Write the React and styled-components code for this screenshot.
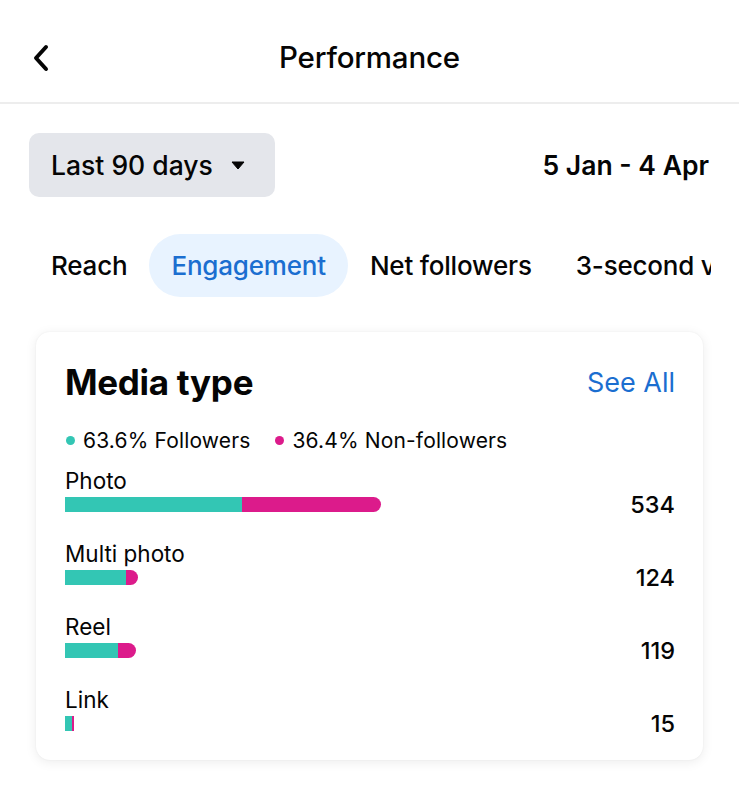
import React from 'react';
import styled, { createGlobalStyle } from 'styled-components';

const GlobalStyle = createGlobalStyle`
  html, body {
    margin: 0;
    padding: 0;
    background: #fff;
    font-family: Inter, "Noto Sans", sans-serif;
    color: #050505;
  }
`;

const Page = styled.div`
  width: 739px;
  height: 789px;
  overflow: hidden;
  background: #fff;
`;

const Header = styled.header`
  height: 104px;
  display: flex;
  align-items: center;
  justify-content: center;
  position: relative;
  border-bottom: 2px solid #ededed;
  box-sizing: border-box;
`;

const BackButton = styled.div`
  position: absolute;
  left: 30px;
  top: 42px;
  width: 24px;
  height: 32px;
`;

const Title = styled.h1`
  margin: 0;
  font-size: 29.5px;
  font-weight: 500;
  letter-spacing: -0.2px;
  padding-top: 12px;
`;

const RangeRow = styled.div`
  display: flex;
  align-items: center;
  justify-content: space-between;
  padding: 29px 30px 0 29px;
`;

const RangeButton = styled.div`
  width: 246px;
  height: 64px;
  box-sizing: border-box;
  padding: 0 22px;
  background: #e4e6eb;
  border-radius: 10px;
  display: flex;
  align-items: center;
  gap: 18px;
  font-size: 26.5px;
  font-weight: 500;
  white-space: nowrap;
`;

const DateText = styled.div`
  font-size: 26.5px;
  font-weight: 600;
  letter-spacing: 0;
`;

const Tabs = styled.div`
  display: flex;
  align-items: center;
  margin-top: 37px;
  padding-left: 29px;
  width: 711px;
  box-sizing: border-box;
  overflow: hidden;
  white-space: nowrap;
`;

const Tab = styled.div`
  height: 63px;
  display: flex;
  align-items: center;
  padding: 0 22px;
  border-radius: 32px;
  font-size: 26px;
  font-weight: 500;
  letter-spacing: -0.2px;
  flex-shrink: 0;
  color: ${p => (p.$active ? '#1b6ed0' : '#050505')};
  background: ${p => (p.$active ? '#e8f3ff' : 'transparent')};
`;

const Card = styled.section`
  margin: 35px 36px 0 36px;
  height: 428px;
  box-sizing: border-box;
  border-radius: 14px;
  background: #fff;
  box-shadow: 0 2px 12px rgba(0, 0, 0, 0.08), 0 0 2px rgba(0, 0, 0, 0.06);
  padding: 29px 28px 0 29px;
`;

const CardHead = styled.div`
  display: flex;
  justify-content: space-between;
  align-items: center;
`;

const CardTitle = styled.h2`
  margin: 0;
  font-size: 35px;
  font-weight: 700;
  letter-spacing: -0.3px;
`;

const SeeAll = styled.span`
  font-size: 27px;
  color: #1b6ed0;
`;

const Legend = styled.div`
  display: flex;
  align-items: center;
  gap: 24px;
  margin-top: 25px;
  font-size: 21px;
  letter-spacing: 0.15px;
`;

const LegendItem = styled.span`
  display: flex;
  align-items: center;
  gap: 8px;
`;

const Dot = styled.span`
  width: 9px;
  height: 9px;
  border-radius: 50%;
  background: ${p => p.$color};
  margin-left: 1px;
`;

const Rows = styled.div`
  margin-top: 14px;
  display: flex;
  flex-direction: column;
  gap: 28px;
`;

const Row = styled.div`
  display: grid;
  grid-template-columns: 1fr auto;
  align-items: center;
`;

const Label = styled.div`
  font-size: 22.5px;
  line-height: 27px;
  grid-column: 1 / -1;
  margin-bottom: 3px;
`;

const Bar = styled.div`
  display: flex;
  height: 15px;
`;

const Seg = styled.div`
  height: 100%;
  background: ${p => p.$color};
  border-radius: ${p => (p.$round ? '0 8px 8px 0' : '0')};
`;

const Value = styled.div`
  font-size: 23.5px;
  font-weight: 500;
  line-height: 15px;
`;

const TEAL = '#33c6b4';
const PINK = '#dc1b8b';

const rows = [
  { name: 'Photo', a: 177, b: 139, value: 534 },
  { name: 'Multi photo', a: 61, b: 12, value: 124 },
  { name: 'Reel', a: 53, b: 18, value: 119 },
  { name: 'Link', a: 7, b: 2, value: 15 },
];

const App = () => (
  <Page>
    <GlobalStyle />
    <Header>
      <BackButton>
        <svg width="24" height="32" viewBox="0 0 24 32">
          <path d="M16 5 L6 16 L16 27" fill="none" stroke="#050505" strokeWidth="4" strokeLinecap="round" strokeLinejoin="round" />
        </svg>
      </BackButton>
      <Title>Performance</Title>
    </Header>
    <RangeRow>
      <RangeButton>
        Last 90 days
        <svg width="14" height="9" viewBox="0 0 14 9">
          <path d="M1 1 L13 1 L7 8 Z" fill="#050505" stroke="#050505" strokeWidth="1" strokeLinejoin="round" />
        </svg>
      </RangeButton>
      <DateText>5 Jan - 4 Apr</DateText>
    </RangeRow>
    <Tabs>
      <Tab>Reach</Tab>
      <Tab $active>Engagement</Tab>
      <Tab>Net followers</Tab>
      <Tab>3-second video views</Tab>
    </Tabs>
    <Card>
      <CardHead>
        <CardTitle>Media type</CardTitle>
        <SeeAll>See All</SeeAll>
      </CardHead>
      <Legend>
        <LegendItem><Dot $color={TEAL} />63.6% Followers</LegendItem>
        <LegendItem><Dot $color={PINK} />36.4% Non-followers</LegendItem>
      </Legend>
      <Rows>
        {rows.map(r => (
          <Row key={r.name}>
            <Label>{r.name}</Label>
            <Bar>
              <Seg $color={TEAL} style={{ width: r.a }} />
              <Seg $color={PINK} $round={r.b > 8} style={{ width: r.b }} />
            </Bar>
            <Value>{r.value}</Value>
          </Row>
        ))}
      </Rows>
    </Card>
  </Page>
);

export default App;
